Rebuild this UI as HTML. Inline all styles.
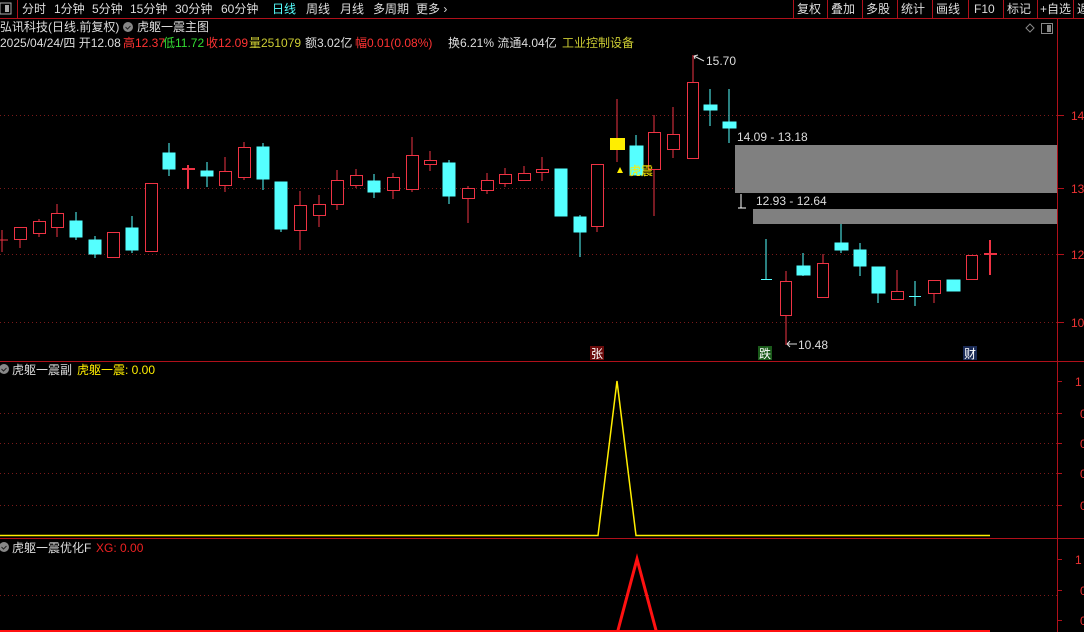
<!DOCTYPE html>
<html><head><meta charset="utf-8"><style>
html,body{margin:0;padding:0;background:#000;width:1084px;height:632px;overflow:hidden}
svg{display:block;font-family:"Liberation Sans","Noto Sans CJK SC",sans-serif}
</style></head><body>
<svg width="1084" height="632" viewBox="0 0 1084 632" xmlns="http://www.w3.org/2000/svg">
<rect width="1084" height="632" fill="#000"/>
<line x1="0" y1="18.5" x2="1084" y2="18.5" stroke="#b0101a" stroke-width="1"/>
<rect x="0" y="3" width="11" height="11" fill="none" stroke="#aaa"/><rect x="5" y="5" width="4" height="7" fill="#aaa"/>
<line x1="17.5" y1="0" x2="17.5" y2="18" stroke="#b0101a"/>
<g font-size="12" fill="#ddd">
<text x="22" y="13">分时</text><text x="54" y="13">1分钟</text><text x="92" y="13">5分钟</text>
<text x="130" y="13">15分钟</text><text x="175" y="13">30分钟</text><text x="221" y="13">60分钟</text>
<text x="272" y="13" fill="#5ff">日线</text><text x="306" y="13">周线</text><text x="340" y="13">月线</text>
<text x="373" y="13">多周期</text><text x="416" y="13">更多 ›</text>
<text x="797" y="13">复权</text><text x="831" y="13">叠加</text><text x="866" y="13">多股</text>
<text x="901" y="13">统计</text><text x="936" y="13">画线</text><text x="974" y="13">F10</text>
<text x="1007" y="13">标记</text><text x="1040" y="13">+自选</text><text x="1077" y="13">返</text>
</g>
<g stroke="#b0101a">
<line x1="793.5" y1="0" x2="793.5" y2="18"/><line x1="827.5" y1="0" x2="827.5" y2="18"/><line x1="862.5" y1="0" x2="862.5" y2="18"/>
<line x1="897.5" y1="0" x2="897.5" y2="18"/><line x1="932.5" y1="0" x2="932.5" y2="18"/><line x1="968.5" y1="0" x2="968.5" y2="18"/>
<line x1="1003.5" y1="0" x2="1003.5" y2="18"/><line x1="1037.5" y1="0" x2="1037.5" y2="18"/><line x1="1073.5" y1="0" x2="1073.5" y2="18"/>
</g>
<g font-size="12">
<text x="0" y="31" fill="#ddd">弘讯科技(日线.前复权)</text>
<circle cx="128" cy="27" r="5" fill="#888"/><path d="M125.5 27 l2 2 l3 -3" stroke="#222" fill="none"/>
<text x="137" y="31" fill="#ddd">虎躯一震主图</text>
<text x="0" y="47" fill="#ddd">2025/04/24/四 开12.08</text>
<text x="123" y="47" fill="#f33">高12.37</text><text x="163" y="47" fill="#3d3">低11.72</text>
<text x="206" y="47" fill="#f33">收12.09</text><text x="249" y="47" fill="#cc3">量251079</text>
<text x="305" y="47" fill="#ddd">额3.02亿</text><text x="355" y="47" fill="#f33">幅0.01(0.08%)</text>
<text x="448" y="47" fill="#ddd">换6.21% 流通4.04亿</text><text x="562" y="47" fill="#cc3">工业控制设备</text>
</g>
<path d="M1030 24 l4 4 l-4 4 l-4 -4z" fill="none" stroke="#888"/>
<rect x="1041.5" y="23.5" width="11" height="10" fill="none" stroke="#888"/><rect x="1047" y="25" width="4" height="7" fill="#888"/>
<line x1="1057.5" y1="18" x2="1057.5" y2="632" stroke="#b0101a"/>
<line x1="0" y1="361.5" x2="1084" y2="361.5" stroke="#b0101a"/>
<line x1="0" y1="538.5" x2="1084" y2="538.5" stroke="#b0101a"/>
<g stroke="#7a1a1a" stroke-dasharray="1,3">
<line x1="0" y1="115.5" x2="1057" y2="115.5"/><line x1="0" y1="188.5" x2="1057" y2="188.5"/>
<line x1="0" y1="254.5" x2="1057" y2="254.5"/><line x1="0" y1="322.5" x2="1057" y2="322.5"/>
<line x1="0" y1="413.5" x2="1057" y2="413.5"/><line x1="0" y1="443.5" x2="1057" y2="443.5"/>
<line x1="0" y1="473.5" x2="1057" y2="473.5"/><line x1="0" y1="505.5" x2="1057" y2="505.5"/>
<line x1="0" y1="595.5" x2="1057" y2="595.5"/>
</g>
<g stroke="#b0101a">
<line x1="1057" y1="115.5" x2="1064" y2="115.5"/><line x1="1057" y1="188.5" x2="1064" y2="188.5"/>
<line x1="1057" y1="254.5" x2="1064" y2="254.5"/><line x1="1057" y1="322.5" x2="1064" y2="322.5"/>
<line x1="1057" y1="381.5" x2="1062" y2="381.5"/><line x1="1057" y1="413.5" x2="1062" y2="413.5"/>
<line x1="1057" y1="443.5" x2="1062" y2="443.5"/><line x1="1057" y1="473.5" x2="1062" y2="473.5"/>
<line x1="1057" y1="505.5" x2="1062" y2="505.5"/><line x1="1057" y1="559.5" x2="1062" y2="559.5"/>
<line x1="1057" y1="590.5" x2="1062" y2="590.5"/><line x1="1057" y1="620.5" x2="1062" y2="620.5"/>
</g>
<g font-size="12" fill="#e33">
<text x="1071" y="120">14</text><text x="1071" y="193">13</text><text x="1071" y="259">12</text><text x="1071" y="327">10</text>
<text x="1075" y="386">1</text><text x="1080" y="418">0</text><text x="1080" y="448">0</text><text x="1080" y="478">0</text><text x="1080" y="510">0</text>
<text x="1075" y="564">1</text><text x="1080" y="595">0</text><text x="1080" y="625">0</text>
</g>
<rect x="735" y="145" width="322" height="48" fill="#808080"/>
<rect x="753" y="209" width="304" height="15" fill="#808080"/>
<g font-size="12" fill="#ddd">
<text x="737" y="141">14.09 - 13.18</text><text x="756" y="205">12.93 - 12.64</text>
<text x="706" y="65">15.70</text><text x="798" y="349">10.48</text>
</g>
<path d="M741 194 v14 M738 208 h8" stroke="#fff" fill="none"/>
<path d="M694 56 l10 5 M694 56 l4 -1 M694 56 l1 3" stroke="#ddd" fill="none"/>
<path d="M787 344 l10 0 M787 344 l3 -3 M787 344 l3 3" stroke="#ddd" fill="none"/>
<g stroke="#ee3344" fill="none" stroke-width="1">
<path d="M2 230v22M0 240h8" /><path d="M20 227v21"/><rect x="14.5" y="227.5" width="12" height="12" fill="#000"/>
<path d="M39 219v18"/><rect x="33.5" y="221.5" width="12" height="12" fill="#000"/>
<path d="M57 204v33"/><rect x="51.5" y="213.5" width="12" height="14" fill="#000"/>
<rect x="107.5" y="232.5" width="12" height="25" fill="#000"/>
<rect x="145.5" y="183.5" width="12" height="68" fill="#000"/>
<path d="M188 165v24M182 169h13" stroke-width="2"/>
<path d="M225 157v35"/><rect x="219.5" y="171.5" width="12" height="14" fill="#000"/>
<path d="M244 142v38"/><rect x="238.5" y="147.5" width="12" height="30" fill="#000"/>
<path d="M300 191v59"/><rect x="294.5" y="205.5" width="12" height="25" fill="#000"/>
<path d="M319 195v32"/><rect x="313.5" y="204.5" width="12" height="11" fill="#000"/>
<path d="M337 170v40"/><rect x="331.5" y="180.5" width="12" height="24" fill="#000"/>
<path d="M356 169v19"/><rect x="350.5" y="175.5" width="12" height="10" fill="#000"/>
<path d="M393 173v26"/><rect x="387.5" y="177.5" width="12" height="13" fill="#000"/>
<path d="M412 137v55"/><rect x="406.5" y="155.5" width="12" height="34" fill="#000"/>
<path d="M430 151v20"/><rect x="424.5" y="160.5" width="12" height="4" fill="#000"/>
<path d="M468 186v37"/><rect x="462.5" y="188.5" width="12" height="10" fill="#000"/>
<path d="M487 173v21"/><rect x="481.5" y="180.5" width="12" height="10" fill="#000"/>
<path d="M505 168v19"/><rect x="499.5" y="174.5" width="12" height="9" fill="#000"/>
<path d="M524 166v15"/><rect x="518.5" y="173.5" width="12" height="7" fill="#000"/>
<path d="M542 157v24"/><rect x="536.5" y="169.5" width="12" height="3" fill="#000"/>
<path d="M597 226v6"/><rect x="591.5" y="164.5" width="12" height="62" fill="#000"/>
<path d="M617 99v63"/>
<path d="M654 115v101"/><rect x="648.5" y="132.5" width="12" height="37" fill="#000"/>
<path d="M673 107v51"/><rect x="667.5" y="134.5" width="12" height="15" fill="#000"/>
<path d="M693 55v27"/><rect x="687.5" y="82.5" width="11" height="76" fill="#000"/>
<path d="M786 271v74"/><rect x="780.5" y="281.5" width="11" height="34" fill="#000"/>
<path d="M823 254v44"/><rect x="817.5" y="263.5" width="11" height="34" fill="#000"/>
<path d="M897 270v30"/><rect x="891.5" y="291.5" width="12" height="8" fill="#000"/>
<path d="M934 293v10"/><rect x="928.5" y="280.5" width="12" height="13" fill="#000"/>
<rect x="966.5" y="255.5" width="11" height="24" fill="#000"/>
<path d="M990 240v35M984 254h13" stroke-width="2"/>
</g>
<g fill="#55ffff" stroke="#55ffff">
<path d="M76 212v28M95 236v22M132 216v37M169 143v33M207 162v25M263 143v47M449 160v44" fill="none"/>
<rect x="70" y="221" width="12" height="16"/><rect x="89" y="240" width="12" height="14"/>
<rect x="126" y="228" width="12" height="22"/><rect x="163" y="153" width="12" height="16"/>
<rect x="201" y="171" width="12" height="5"/><rect x="257" y="147" width="12" height="32"/>
<rect x="275" y="182" width="12" height="47"/><path d="M281 229v3M374 174v24M636 135v40M710 89v37M729 89v54M766 239v40M803 253v23M841 224v29M860 243v33M878 293v10M915 281v25M953 280v11" fill="none"/>
<rect x="368" y="181" width="12" height="11"/><rect x="443" y="163" width="12" height="33"/>
<rect x="555" y="169" width="12" height="47"/><path d="M580 215v42" fill="none"/><rect x="574" y="217" width="12" height="15"/>
<rect x="630" y="146" width="13" height="29"/><rect x="704" y="105" width="13" height="5"/>
<rect x="723" y="122" width="13" height="6"/><path d="M761 279.5h11M909 296.5h12" fill="none"/>
<rect x="797" y="266" width="13" height="9"/><rect x="835" y="243" width="13" height="7"/>
<rect x="854" y="250" width="12" height="16"/><rect x="872" y="267" width="13" height="26"/>
<rect x="947" y="280" width="13" height="11"/>
</g>
<rect x="610" y="138" width="15" height="12" fill="#ffee00"/>
<path d="M617 173l3 -6l3 6z" fill="#ffee00"/>
<text x="629" y="175" font-size="12" fill="#ffee00">虎震</text>
<rect x="590" y="346" width="14" height="14" fill="#6a0a0a"/><text x="591" y="358" font-size="12" fill="#fff">张</text>
<rect x="758" y="346" width="14" height="14" fill="#1a5a1a"/><text x="759" y="358" font-size="12" fill="#fff">跌</text>
<rect x="963" y="346" width="14" height="14" fill="#1a2a55"/><text x="964" y="358" font-size="12" fill="#fff">财</text>
<circle cx="4" cy="369" r="5" fill="#888"/><path d="M1.5 369 l2 2 l3 -3" stroke="#222" fill="none"/>
<text x="12" y="374" font-size="12" fill="#ddd">虎躯一震副</text>
<text x="77" y="374" font-size="12" fill="#ffee00">虎躯一震: 0.00</text>
<polyline points="0,535.5 598,535.5 617,381 636,535.5 990,535.5" fill="none" stroke="#ffee00" stroke-width="1.5"/>
<circle cx="4" cy="547" r="5" fill="#888"/><path d="M1.5 547 l2 2 l3 -3" stroke="#222" fill="none"/>
<text x="12" y="552" font-size="12" fill="#ddd">虎躯一震优化F</text>
<text x="96" y="552" font-size="12" fill="#e22">XG: 0.00</text>
<polyline points="617,634 637,559 657,634" fill="none" stroke="#ff1111" stroke-width="3"/>
<line x1="0" y1="631" x2="990" y2="631" stroke="#ff1111" stroke-width="2"/>
</svg>
</body></html>
